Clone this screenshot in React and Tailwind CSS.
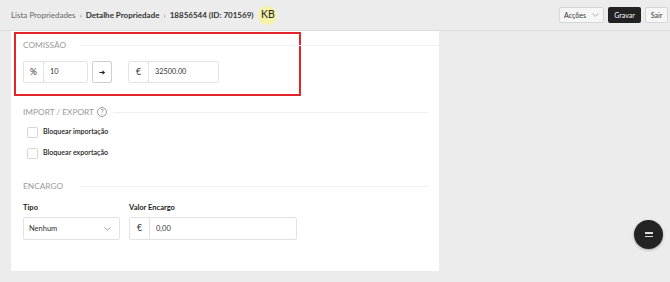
import React from "react";

export default function App() {
  return (
    <div className="w-[670px] h-[282px] bg-[#ececec] overflow-hidden relative" style={{ fontFamily: "Lato, 'Open Sans', sans-serif" }}>
      {/* Header */}
      <div className="h-[30px] flex items-center justify-between pl-[11px] pr-[2px] shadow-[0_1px_1px_rgba(0,0,0,0.06)]">
        <div className="flex items-center text-[8px] text-[#333]">
          <span className="text-[#666]">Lista Propriedades</span>
          <span className="mx-[4px] text-[#888]">›</span>
          <span className="font-bold">Detalhe Propriedade</span>
          <span className="mx-[4px] text-[#888]">›</span>
          <span className="font-bold">18856544 (ID: 701569)</span>
          <span className="ml-[5px] w-[19px] h-[19px] rounded-full bg-[#f6f2a8] flex items-center justify-center text-[10.5px] text-[#222]">KB</span>
        </div>
        <div className="flex items-center gap-[4px] text-[7px]">
          <div className="h-[16px] w-[45px] border border-[#d6d6d6] bg-[#f6f6f6] rounded-[2px] flex items-center justify-center gap-[6px] text-[#333]">
            <span>Acções</span>
            <svg width="7" height="4" viewBox="0 0 7 4"><path d="M0.5 0.5 L3.5 3.2 L6.5 0.5" fill="none" stroke="#999" strokeWidth="0.8" /></svg>
          </div>
          <div className="h-[16px] w-[33px] bg-[#222] rounded-[2px] flex items-center justify-center text-white">Gravar</div>
          <div className="h-[16px] w-[23px] border border-[#d6d6d6] bg-[#f6f6f6] rounded-[2px] flex items-center justify-center text-[#333]">Sair</div>
        </div>
      </div>

      {/* Panel */}
      <div className="ml-[11px] mt-[1px] w-[428px] h-[240px] bg-white pt-[1px] pl-[3px]">
        {/* Comissão (highlighted) */}
        <div className="w-[287px] h-[64px] border-2 border-[#e0262b] pl-[7px] pt-[7px] relative">
          <div className="absolute left-[7px] top-[7px] right-[-140px] flex items-center">
            <div className="text-[8.3px] leading-none text-[#9a9a9a] uppercase">Comissão</div>
            <div className="flex-1 h-px bg-[#f0f0f0] ml-[14px]"></div>
          </div>
          <div className="mt-[20px] flex items-center">
            <div className="flex h-[22px] border border-[#e3e3e3] rounded-[2px] text-[7.3px] text-[#333]">
              <div className="w-[20px] flex items-center justify-center border-r border-[#e3e3e3] text-[8.5px]">%</div>
              <div className="w-[43px] flex items-center pl-[6px]">10</div>
            </div>
            <div className="ml-[4px] w-[20px] h-[22px] border border-[#cfcfcf] rounded-[2px] flex items-center justify-center">
              <svg width="7" height="7" viewBox="0 0 8 8"><path d="M0.5 4 H5" stroke="#222" strokeWidth="1.2" /><path d="M4 1.5 L7 4 L4 6.5 Z" fill="#222" /></svg>
            </div>
            <div className="ml-[16px] flex h-[22px] border border-[#e3e3e3] rounded-[2px] text-[7.3px] text-[#333]">
              <div className="w-[20px] flex items-center justify-center border-r border-[#e3e3e3] text-[8.5px]">€</div>
              <div className="w-[69px] flex items-center pl-[6px]">32500.00</div>
            </div>
          </div>
        </div>

        {/* Import / Export */}
        <div className="pl-[9px] pr-[11px] mt-[11px]">
          <div className="flex items-center">
            <div className="text-[8.3px] leading-none text-[#9a9a9a] uppercase flex items-center">
              IMPORT / EXPORT
              <span className="ml-[3px] w-[10px] h-[10px] rounded-full border border-[#999] flex items-center justify-center text-[7px] leading-none text-[#888]">?</span>
            </div>
            <div className="flex-1 h-px bg-[#f0f0f0] ml-[6px]"></div>
          </div>
          <div className="mt-[10px] pl-[4px] flex flex-col gap-[10px] text-[7.1px] text-[#222] font-semibold">
            <div className="flex items-center gap-[5px]">
              <div className="w-[11px] h-[11px] border border-[#d6d6d6] rounded-[2px]"></div>
              <span>Bloquear importação</span>
            </div>
            <div className="flex items-center gap-[5px]">
              <div className="w-[11px] h-[11px] border border-[#d6d6d6] rounded-[2px]"></div>
              <span>Bloquear exportação</span>
            </div>
          </div>

          {/* Encargo */}
          <div className="mt-[23px] flex items-center">
            <div className="text-[8.3px] leading-none text-[#9a9a9a] uppercase">ENCARGO</div>
            <div className="flex-1 h-px bg-[#f0f0f0] ml-[17px]"></div>
          </div>
          <div className="mt-[13px] flex gap-[9px] text-[7.5px]">
            <div className="flex flex-col">
              <div className="font-bold text-[#222] h-[10px] leading-[10px]">Tipo</div>
              <div className="mt-[4px] w-[97px] h-[23px] border border-[#e3e3e3] rounded-[2px] flex items-center justify-between pl-[5px] pr-[8px] text-[#333]">
                <span>Nenhum</span>
                <svg width="7" height="4" viewBox="0 0 7 4"><path d="M0.5 0.5 L3.5 3.2 L6.5 0.5" fill="none" stroke="#888" strokeWidth="0.8" /></svg>
              </div>
            </div>
            <div className="flex flex-col">
              <div className="font-bold text-[#222] h-[10px] leading-[10px]">Valor Encargo</div>
              <div className="mt-[4px] flex w-[168px] h-[23px] border border-[#e3e3e3] rounded-[2px] text-[#333]">
                <div className="w-[20px] flex items-center justify-center border-r border-[#e3e3e3] text-[8.5px]">€</div>
                <div className="flex items-center pl-[6px]">0,00</div>
              </div>
            </div>
          </div>
        </div>
      </div>

      {/* FAB */}
      <div className="absolute left-[634px] top-[220px] w-[29px] h-[29px] rounded-full bg-[#232323] shadow-[0_1px_3px_rgba(0,0,0,0.3)] flex items-center justify-center">
        <div className="flex flex-col gap-[2px]">
          <div className="w-[8px] h-[1.5px] bg-[#ddd]"></div>
          <div className="w-[8px] h-[1.5px] bg-[#ddd]"></div>
        </div>
      </div>
    </div>
  );
}
